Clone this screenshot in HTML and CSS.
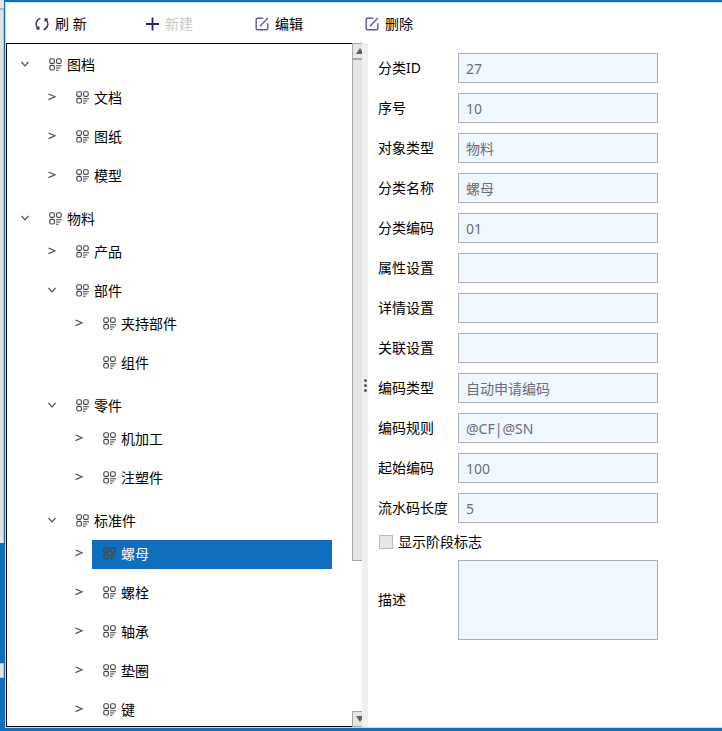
FILE: index.html
```html
<!DOCTYPE html>
<html lang="zh-CN">
  <head>
    <meta charset="UTF-8" />
    <meta name="viewport" content="width=device-width, initial-scale=1.0" />
    <title>分类</title>
    <link rel="stylesheet" href="styles.css">
  </head>
  <body>
    <!-- shared icons -->
    <svg class="sprite" aria-hidden="true">
      <symbol id="icon-class" viewBox="0 0 14 14">
        <rect x="0.8" y="0.8" width="4.6" height="4.6" rx="1.4" />
        <rect x="7.6" y="0.8" width="4.6" height="4.6" rx="1.4" />
        <rect x="0.8" y="7.4" width="4.6" height="4.6" rx="1.4" />
        <path d="M7 7.8H13M7 10H11.4M7 12.2H9.6" />
      </symbol>
      <symbol id="icon-down" viewBox="0 0 10 10">
        <path d="M1.5 3L5 6.8L8.5 3" />
      </symbol>
      <symbol id="icon-right" viewBox="0 0 10 10">
        <path d="M1.5 2L8 4.8L1.5 7.6" />
      </symbol>
      <symbol id="icon-edit" viewBox="0 0 14 14">
        <path d="M8.2 1.2H2.4Q1.2 1.2 1.2 2.4V11.6Q1.2 12.8 2.4 12.8H11.6Q12.8 12.8 12.8 11.6V6.2" />
        <path d="M5 9.2L12.8 1" />
      </symbol>
    </svg>

    <div class="backdrop">
      <div class="backdrop__head"></div>
      <div class="backdrop__page"></div>
      <div class="backdrop__mark"></div>
    </div>

    <main class="window">
      <nav class="toolbar">
        <button type="button" class="toolbar__btn">
          <svg class="toolbar__icon toolbar__icon--dark" viewBox="0 0 14 14">
            <path d="M5.4 1.4A5.8 5.8 0 0 0 3.2 11.4M8.6 12.6A5.8 5.8 0 0 0 10.8 2.6" />
            <path d="M1.2 11.8L3.8 12L3.8 9.4M12.8 2.2L10.2 2L10.2 4.6" />
          </svg>
          <span>刷 新</span>
        </button>
        <button type="button" class="toolbar__btn" disabled>
          <svg class="toolbar__icon toolbar__icon--plus" viewBox="0 0 14 14">
            <path d="M7.5 0.5V13.5M1 7H14" />
          </svg>
          <span>新建</span>
        </button>
        <button type="button" class="toolbar__btn">
          <svg class="toolbar__icon"><use href="#icon-edit" /></svg>
          <span>编辑</span>
        </button>
        <button type="button" class="toolbar__btn">
          <svg class="toolbar__icon"><use href="#icon-edit" /></svg>
          <span>删除</span>
        </button>
      </nav>

      <div class="content">
        <section class="panel">
          <ul class="tree">
            <li class="tree__item">
              <div class="tree__row">
                <button type="button" class="tree__toggle" aria-label="收起"><svg><use href="#icon-down" /></svg></button>
                <a href="#" class="tree__node"><svg><use href="#icon-class" /></svg>图档</a>
              </div>
              <ul class="tree__children">
                <li class="tree__item">
                  <div class="tree__row">
                    <button type="button" class="tree__toggle" aria-label="展开"><svg><use href="#icon-right" /></svg></button>
                    <a href="#" class="tree__node"><svg><use href="#icon-class" /></svg>文档</a>
                  </div>
                </li>
                <li class="tree__item">
                  <div class="tree__row">
                    <button type="button" class="tree__toggle" aria-label="展开"><svg><use href="#icon-right" /></svg></button>
                    <a href="#" class="tree__node"><svg><use href="#icon-class" /></svg>图纸</a>
                  </div>
                </li>
                <li class="tree__item">
                  <div class="tree__row">
                    <button type="button" class="tree__toggle" aria-label="展开"><svg><use href="#icon-right" /></svg></button>
                    <a href="#" class="tree__node"><svg><use href="#icon-class" /></svg>模型</a>
                  </div>
                </li>
              </ul>
            </li>
            <li class="tree__item">
              <div class="tree__row">
                <button type="button" class="tree__toggle" aria-label="收起"><svg><use href="#icon-down" /></svg></button>
                <a href="#" class="tree__node"><svg><use href="#icon-class" /></svg>物料</a>
              </div>
              <ul class="tree__children">
                <li class="tree__item">
                  <div class="tree__row">
                    <button type="button" class="tree__toggle" aria-label="展开"><svg><use href="#icon-right" /></svg></button>
                    <a href="#" class="tree__node"><svg><use href="#icon-class" /></svg>产品</a>
                  </div>
                </li>
                <li class="tree__item">
                  <div class="tree__row">
                    <button type="button" class="tree__toggle" aria-label="收起"><svg><use href="#icon-down" /></svg></button>
                    <a href="#" class="tree__node"><svg><use href="#icon-class" /></svg>部件</a>
                  </div>
                  <ul class="tree__children">
                    <li class="tree__item">
                      <div class="tree__row">
                        <button type="button" class="tree__toggle" aria-label="展开"><svg><use href="#icon-right" /></svg></button>
                        <a href="#" class="tree__node"><svg><use href="#icon-class" /></svg>夹持部件</a>
                      </div>
                    </li>
                    <li class="tree__item">
                      <div class="tree__row">
                        <span class="tree__toggle"></span>
                        <a href="#" class="tree__node"><svg><use href="#icon-class" /></svg>组件</a>
                      </div>
                    </li>
                  </ul>
                </li>
                <li class="tree__item">
                  <div class="tree__row">
                    <button type="button" class="tree__toggle" aria-label="收起"><svg><use href="#icon-down" /></svg></button>
                    <a href="#" class="tree__node"><svg><use href="#icon-class" /></svg>零件</a>
                  </div>
                  <ul class="tree__children">
                    <li class="tree__item">
                      <div class="tree__row">
                        <button type="button" class="tree__toggle" aria-label="展开"><svg><use href="#icon-right" /></svg></button>
                        <a href="#" class="tree__node"><svg><use href="#icon-class" /></svg>机加工</a>
                      </div>
                    </li>
                    <li class="tree__item">
                      <div class="tree__row">
                        <button type="button" class="tree__toggle" aria-label="展开"><svg><use href="#icon-right" /></svg></button>
                        <a href="#" class="tree__node"><svg><use href="#icon-class" /></svg>注塑件</a>
                      </div>
                    </li>
                  </ul>
                </li>
                <li class="tree__item">
                  <div class="tree__row">
                    <button type="button" class="tree__toggle" aria-label="收起"><svg><use href="#icon-down" /></svg></button>
                    <a href="#" class="tree__node"><svg><use href="#icon-class" /></svg>标准件</a>
                  </div>
                  <ul class="tree__children">
                    <li class="tree__item">
                      <div class="tree__row">
                        <button type="button" class="tree__toggle" aria-label="展开"><svg><use href="#icon-right" /></svg></button>
                        <a href="#" class="tree__node tree__node--selected"><svg><use href="#icon-class" /></svg>螺母</a>
                      </div>
                    </li>
                    <li class="tree__item">
                      <div class="tree__row">
                        <button type="button" class="tree__toggle" aria-label="展开"><svg><use href="#icon-right" /></svg></button>
                        <a href="#" class="tree__node"><svg><use href="#icon-class" /></svg>螺栓</a>
                      </div>
                    </li>
                    <li class="tree__item">
                      <div class="tree__row">
                        <button type="button" class="tree__toggle" aria-label="展开"><svg><use href="#icon-right" /></svg></button>
                        <a href="#" class="tree__node"><svg><use href="#icon-class" /></svg>轴承</a>
                      </div>
                    </li>
                    <li class="tree__item">
                      <div class="tree__row">
                        <button type="button" class="tree__toggle" aria-label="展开"><svg><use href="#icon-right" /></svg></button>
                        <a href="#" class="tree__node"><svg><use href="#icon-class" /></svg>垫圈</a>
                      </div>
                    </li>
                    <li class="tree__item">
                      <div class="tree__row">
                        <button type="button" class="tree__toggle" aria-label="展开"><svg><use href="#icon-right" /></svg></button>
                        <a href="#" class="tree__node"><svg><use href="#icon-class" /></svg>键</a>
                      </div>
                    </li>
                  </ul>
                </li>
              </ul>
            </li>
          </ul>
          <div class="scrollbar">
            <button type="button" class="scrollbar__btn" aria-label="向上滚动">
              <svg viewBox="0 0 8 6"><path d="M0 6L4 0L8 6Z" /></svg>
            </button>
            <div class="scrollbar__track">
              <div class="scrollbar__thumb"></div>
            </div>
            <button type="button" class="scrollbar__btn" aria-label="向下滚动">
              <svg viewBox="0 0 8 6"><path d="M0 0L4 6L8 0Z" /></svg>
            </button>
          </div>
        </section>

        <div class="splitter">
          <span class="splitter__dot"></span>
          <span class="splitter__dot"></span>
          <span class="splitter__dot"></span>
        </div>

        <form class="form">
          <label for="class-id">分类ID</label>
          <input type="text" id="class-id" class="form__input" value="27" />
          <label for="order">序号</label>
          <input type="text" id="order" class="form__input" value="10" />
          <label for="object-type">对象类型</label>
          <input type="text" id="object-type" class="form__input" value="物料" />
          <label for="class-name">分类名称</label>
          <input type="text" id="class-name" class="form__input" value="螺母" />
          <label for="class-code">分类编码</label>
          <input type="text" id="class-code" class="form__input" value="01" />
          <label for="attr">属性设置</label>
          <input type="text" id="attr" class="form__input" />
          <label for="detail">详情设置</label>
          <input type="text" id="detail" class="form__input" />
          <label for="relation">关联设置</label>
          <input type="text" id="relation" class="form__input" />
          <label for="code-type">编码类型</label>
          <input type="text" id="code-type" class="form__input" value="自动申请编码" />
          <label for="code-rule">编码规则</label>
          <input type="text" id="code-rule" class="form__input" value="@CF|@SN" />
          <label for="code-start">起始编码</label>
          <input type="text" id="code-start" class="form__input" value="100" />
          <label for="serial-length">流水码长度</label>
          <input type="text" id="serial-length" class="form__input" value="5" />
          <div class="form__check">
            <input type="checkbox" id="show-stage" class="form__checkbox" />
            <label for="show-stage">显示阶段标志</label>
          </div>
          <label for="description">描述</label>
          <textarea id="description" class="form__input form__input--area"></textarea>
        </form>
      </div>
    </main>
  </body>
</html>
```
FILE: styles.css
```css
* {
  margin: 0;
  padding: 0;
  box-sizing: border-box;
}

body {
  display: flex;
  height: 100vh;
  overflow: hidden;
  color: #000;
  background-color: #106ebe;
  font-family: "Noto Sans", "Noto Sans CJK SC", sans-serif;
  font-size: 14px;
  line-height: 20px;
}

button,
input,
textarea {
  font: inherit;
  color: inherit;
}

button {
  background: none;
  border: none;
}

svg {
  fill: none;
  flex-shrink: 0;
}

.sprite {
  display: none;
}

/* strip of the page behind the window */
.backdrop {
  display: flex;
  flex-direction: column;
  width: 4px;
}
.backdrop__head {
  height: 10px;
  border-bottom: 2px solid #b9b4b4;
  background-color: #e6e6e6;
}
.backdrop__page {
  height: 533px;
  border-right: 1px solid #b4c6d6;
  background-color: #e4e4e4;
}
.backdrop__mark {
  height: 15px;
  margin-top: 120px;
  border: 1px solid #b4c6d6;
  border-left: none;
  background-color: #e4e4e4;
}

.window {
  flex: 1;
  display: flex;
  flex-direction: column;
  min-width: 0;
  border: solid #106ebe;
  border-width: 2px 0 3px 1px;
  padding: 0 0 1px 1px;
  background-color: #fff;
  box-shadow: inset 1px 0 #c4dcf0, inset 0 1px #d4e6f5, inset 0 -1px #c4dcf0;
}

.toolbar {
  display: flex;
  height: 41px;
  padding-left: 29px;
}
.toolbar__btn {
  display: flex;
  align-items: center;
  gap: 6px;
  width: 110px;
  padding-top: 2px;
}
.toolbar__btn:disabled {
  color: #c8c8c8;
}
.toolbar__icon {
  width: 14px;
  height: 14px;
  stroke: #5b5ba6;
  stroke-width: 1.4;
}
.toolbar__icon--dark {
  stroke: #33337f;
}
.toolbar__icon--plus {
  stroke: #22227a;
  stroke-width: 1.8;
}

.content {
  flex: 1;
  display: flex;
  min-height: 0;
}

/* tree */
.panel {
  display: flex;
  width: 356px;
}
.tree {
  flex: 1;
  overflow: hidden;
  padding: 7px 0 0 5px;
  border: 1px solid #000;
  border-right: none;
  list-style: none;
}
.tree__children {
  padding: 4px 0 4px 27px;
  list-style: none;
}
.tree__item + .tree__item {
  margin-top: 10px;
}
.tree__row {
  display: flex;
  height: 29px;
}
.tree__toggle {
  display: flex;
  align-items: center;
  justify-content: center;
  width: 26px;
  padding-bottom: 4px;
}
.tree__toggle svg {
  width: 10px;
  height: 10px;
  stroke: #505050;
  stroke-width: 1.2;
}
.tree__node {
  display: flex;
  align-items: center;
  gap: 4px;
  width: 240px;
  padding: 0 0 2px 11px;
  color: inherit;
  text-decoration: none;
}
.tree__node svg {
  width: 14px;
  height: 14px;
  stroke: #444;
  stroke-width: 1.1;
}
.tree__node--selected {
  color: #fff;
  background-color: #106ebe;
}

.scrollbar {
  display: flex;
  flex-direction: column;
  width: 10px;
  overflow: hidden;
}
.scrollbar__btn {
  display: flex;
  align-items: center;
  width: 16px;
  height: 16px;
  padding-left: 3px;
  border: 1px solid #a8a8a8;
  background-color: #e6e6e6;
}
.scrollbar__btn svg {
  width: 8px;
  height: 6px;
  fill: #606060;
}
.scrollbar__track {
  flex: 1;
}
.scrollbar__thumb {
  width: 16px;
  height: 77%;
  border: 1px solid #a8a8a8;
  background-color: #e4e4e4;
}

.splitter {
  display: flex;
  flex-direction: column;
  align-items: center;
  justify-content: center;
  gap: 2px;
  width: 6px;
  background-color: #f0f0f0;
}
.splitter__dot {
  width: 3px;
  height: 3px;
  border-radius: 50%;
  background-color: #555;
}

/* form */
.form {
  display: grid;
  grid-template-columns: 70px 200px;
  gap: 10px;
  align-content: start;
  align-items: center;
  padding: 10px;
}
.form__input {
  width: 100%;
  height: 30px;
  padding: 0 7px;
  border: 1px solid #abadb3;
  color: #6d6d78;
  background-color: #eff7ff;
  outline: none;
}
.form__input--area {
  height: 80px;
  resize: none;
}
.form__check {
  grid-column: span 2;
  display: flex;
  align-items: center;
  gap: 5px;
  height: 17px;
}
.form__checkbox {
  appearance: none;
  width: 14px;
  height: 14px;
  margin-left: 1px;
  border: 1px solid #bcbcbc;
  background-color: #e6e6e6;
}
```
